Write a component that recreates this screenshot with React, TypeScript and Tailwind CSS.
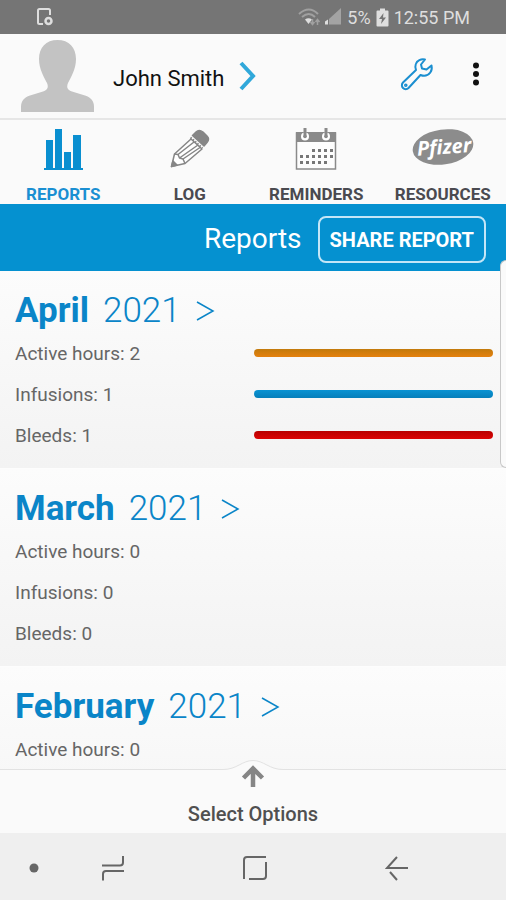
import { useState } from "react";
import type { ReactNode } from "react";

interface StatType {
  label: string;
  value: number;
  bar: string;
}

interface MonthType {
  month: string;
  year: number;
  stats: StatType[];
}

const orangeBar = "bg-linear-to-b from-[#c27a0c] to-[#e5810f]";
const blueBar = "bg-linear-to-b from-[#0a93d3] to-[#067fba]";
const redBar = "bg-linear-to-b from-[#b80000] to-[#dc0404]";

const makeStats = (active: number, infusions: number, bleeds: number): StatType[] => [
  { label: "Active hours", value: active, bar: orangeBar },
  { label: "Infusions", value: infusions, bar: blueBar },
  { label: "Bleeds", value: bleeds, bar: redBar },
];

const months: MonthType[] = [
  { month: "April", year: 2021, stats: makeStats(2, 1, 1) },
  { month: "March", year: 2021, stats: makeStats(0, 0, 0) },
  { month: "February", year: 2021, stats: [{ label: "Active hours", value: 0, bar: orangeBar }] },
];

const StatusBar = () => (
  <div className="flex h-[34px] shrink-0 items-center bg-[#757575] pr-9 pl-9 text-[#dedede]">
    <svg width="18" height="20" viewBox="0 0 18 20" fill="none" stroke="currentColor" strokeWidth="2">
      <path d="M7 17H3.5Q2 17 2 15.500V3.500Q2 2 3.500 2H12.500Q14 2 14 3.500V8" />
      <circle cx="12.500" cy="14" r="3" strokeWidth="2.500" />
    </svg>
    <div className="ml-auto flex items-center gap-[5px]">
      <svg width="44" height="20" viewBox="0 0 44 20" fill="none">
        <path d="M1 7Q11 -2 20 7M4 10Q11 4 17 10" stroke="#a0a0a0" strokeWidth="2" />
        <path d="M7 12.500Q10.500 10 14 12.500L10.500 17Z" fill="#dedede" />
        <path d="M14.500 12V17M12.500 15L14.500 17.500L16.500 15M19.500 18V13M17.500 15L19.500 12.500L21.500 15" stroke="#a0a0a0" strokeWidth="1.500" />
        <path d="M27 17.500V14.500L30 12.500V17.500Z" fill="#dedede" />
        <path d="M31 17.500V12L43 1V17.500Z" fill="#a3a3a3" />
      </svg>
      <span className="text-[18px]">5%</span>
      <svg width="13" height="19" viewBox="0 0 13 19">
        <path d="M4 0.500H9V2.500H11.500Q12.500 2.500 12.500 3.500V17.500Q12.500 18.500 11.500 18.500H1.500Q0.500 18.500 0.500 17.500V3.500Q0.500 2.500 1.500 2.500H4Z" fill="currentColor" />
        <path d="M7.500 5L3 11H6L5 16L10 9.500H7Z" fill="#757575" />
      </svg>
      <span className="text-[18px]">12:55 PM</span>
    </div>
  </div>
);

const Header = () => (
  <header className="flex h-[86px] shrink-0 items-center border-b-2 border-[#e6e6e6] bg-[#fafafa] pr-[14px] pl-5">
    <svg width="75" height="74" viewBox="0 0 75 74" fill="#c3c3c3">
      <path d="M37.500 1C49 1 56 8.500 56 20C56 30 51 38 48 44C46 49 48 51 52 52.500L65 56.500C71 58.500 74 62 74 68V73H1V68C1 62 4 58.500 10 56.500L23 52.500C27 51 29 49 27 44C24 38 19 30 19 20C19 8.500 26 1 37.500 1Z" />
    </svg>
    <button type="button" className="ml-[18px] flex items-center gap-[14px] text-[22px] text-[#111111]">
      <span className="pt-1">John Smith</span>
      <svg width="20" height="32" viewBox="0 0 20 32" fill="none" stroke="#30a8da" strokeWidth="4">
        <path d="M3 3L15 16L3 29" />
      </svg>
    </button>
    <div className="ml-auto flex items-center gap-[26px] pb-1">
      <button type="button" aria-label="Settings">
        <svg width="34" height="34" viewBox="0 0 34 34" fill="none" stroke="#1b8fd0" strokeWidth="2" strokeLinejoin="round">
          <path d="M25 2.500C21 1.500 17 3.500 15.800 7C15 9 15.400 11 16 13L3 25.500C1.500 27 1.500 29.500 3 31C4.500 32.500 7 32.500 8.500 31L20.500 18C24 19.500 28 18.500 30.300 15.500C31.800 13.500 32 11 31.500 8.500L26.500 12.500L22 11.500L21 7.500Z" />
          <circle cx="5.800" cy="28.200" r="0.800" />
        </svg>
      </button>
      <button type="button" aria-label="More" className="flex w-8 justify-center">
        <svg width="8" height="24" viewBox="0 0 8 24" fill="#111111">
          <circle cx="4" cy="3.500" r="3" />
          <circle cx="4" cy="12" r="3" />
          <circle cx="4" cy="20.500" r="3" />
        </svg>
      </button>
    </div>
  </header>
);

const ReportsIcon = () => (
  <svg width="40" height="42" viewBox="0 0 40 42" fill="#0a8fd0">
    <path d="M1 40H3V12H10V40H12V1H19V40H21V24H28V40H30V7H38V40H40V42H1Z" />
  </svg>
);

const LogIcon = () => (
  <svg width="40" height="42" viewBox="0 0 40 42" fill="none" stroke="#868686" strokeWidth="1.500" strokeLinejoin="round">
    <path d="M21 11L32 21L15 35.500L1.500 38.500L4.500 26Z" fill="#fff" />
    <path d="M4.500 26L8 26.500L9.500 30L13 31L15 35.500M8 26.500L24 14M9.500 30L28 17M13 31L30 19.500" />
    <path d="M1.500 38.500L3 33L7 37Z" fill="#868686" />
    <path d="M26 4Q29 1 33 4L37 8Q40 11 37 14.500L34 18L22.500 7.500Z" fill="#868686" />
    <path d="M20.500 9.500L32.500 20" strokeWidth="2" strokeDasharray="1.500 1.500" />
  </svg>
);

const dotRows = [
  { y: 21, xs: [17, 23, 29, 35] },
  { y: 27, xs: [5, 11, 17, 23, 29, 35] },
  { y: 33, xs: [5, 11, 17, 23, 29] },
];

const RemindersIcon = () => (
  <svg width="42" height="42" viewBox="0 0 42 42">
    <path d="M1.500 5V41H40.500V5Z" fill="#fdfdfd" stroke="#8a8a8a" strokeWidth="1.500" />
    <path d="M1 4H41V14H1Z" fill="#8a8a8a" />
    {[10, 31].map((x) => (
      <g key={x}>
        <circle cx={x} cy="8.500" r="4" fill="#fff" />
        <path d={`M${x} 0V9`} stroke="#8a8a8a" strokeWidth="3" />
        <circle cx={x} cy="8.500" r="1.800" fill="#8a8a8a" />
      </g>
    ))}
    {dotRows.map((row) =>
      row.xs.map((x) => <rect key={`${x}-${row.y}`} x={x} y={row.y} width="3" height="3" fill="#777777" />)
    )}
  </svg>
);

const ResourcesIcon = () => (
  <svg width="62" height="42" viewBox="0 0 62 42">
    <ellipse cx="31" cy="19" rx="30.500" ry="17.500" transform="rotate(-8 31 19)" fill="#8c8c8c" />
    <text x="32" y="26" textAnchor="middle" transform="rotate(-4 31 19)" fill="#fff" className="font-['Open_Sans',sans-serif] text-[20px] font-bold italic">
      Pfizer
    </text>
  </svg>
);

const tabs: { name: string; icon: ReactNode }[] = [
  { name: "REPORTS", icon: <ReportsIcon /> },
  { name: "LOG", icon: <LogIcon /> },
  { name: "REMINDERS", icon: <RemindersIcon /> },
  { name: "RESOURCES", icon: <ResourcesIcon /> },
];

const MonthCard = ({ month, year, stats }: MonthType) => (
  <section className="min-h-[198px] shrink-0 border-b border-[#fdfdfd] bg-linear-to-b from-[#fcfcfc] to-[#f3f3f3] pt-4 pr-[13px] pb-[11px] pl-[15px]">
    <h2 className="text-[35px] leading-[47px] text-[#0a85c8]">
      <button type="button" className="flex items-center gap-[14px]">
        <span className="font-bold">{month}</span>
        <span className="font-light">{year}</span>
        <svg width="20" height="22" viewBox="0 0 20 22" fill="none" stroke="currentColor" strokeWidth="1.500">
          <path d="M2 2L18 11L2 20" />
        </svg>
      </button>
    </h2>
    {stats.map((stat) => (
      <div key={stat.label} className="grid h-[41px] grid-cols-2 items-center">
        <p className="text-[19px] text-[#666666]">
          {stat.label}: {stat.value}
        </p>
        {stat.value > 0 ? <div className={`mb-1 h-2 rounded-full ${stat.bar}`}></div> : null}
      </div>
    ))}
  </section>
);

const SelectOptions = () => (
  <div className="relative h-16 shrink-0 border-t border-[#e2e2e2] bg-[#fafafa]">
    {/* bump that rises above the top border */}
    <svg className="absolute -top-[11px] left-1/2 -translate-x-1/2" width="60" height="32" viewBox="0 0 60 32">
      <path d="M0 10.500C14 10.500 19 1.500 30 1.500S46 10.500 60 10.500V14H0Z" fill="#fafafa" />
      <path d="M0 10.500C14 10.500 19 1.500 30 1.500S46 10.500 60 10.500" fill="none" stroke="#e2e2e2" />
      <path d="M30 28V10M20.500 19L30 9.500L39.500 19" fill="none" stroke="#858585" strokeWidth="4.500" />
    </svg>
    <button type="button" className="h-full w-full pt-6 text-[20px] font-medium text-[#505050]">
      Select Options
    </button>
  </div>
);

const NavBar = () => (
  <nav className="grid h-[67px] shrink-0 grid-cols-[68px_1fr_1fr_1fr] items-center justify-items-center bg-[#efefef] pt-[2px] pr-9 text-[#666666]">
    <svg width="10" height="10" viewBox="0 0 10 10" fill="currentColor">
      <circle cx="5" cy="5" r="4.500" />
    </svg>
    <button type="button" aria-label="Recent apps" className="pr-11">
      <svg width="24" height="26" viewBox="0 0 24 26" fill="none" stroke="currentColor" strokeWidth="2">
        <path d="M1 10.500H19Q22 10.500 22 7.500V1M23 16H5Q2 16 2 19V25.500" />
      </svg>
    </button>
    <button type="button" aria-label="Home" className="pr-7">
      <svg width="26" height="26" viewBox="0 0 26 26" fill="none" stroke="currentColor" strokeWidth="2">
        <path d="M24 2H5Q2 2 2 5V24M7 24H21Q24 24 24 21V7" />
      </svg>
    </button>
    <button type="button" aria-label="Back" className="pr-3">
      <svg width="24" height="26" viewBox="0 0 24 26" fill="none" stroke="currentColor" strokeWidth="2">
        <path d="M23 13H2L12 2M5 17L12 25" />
      </svg>
    </button>
  </nav>
);

const App = () => {
  const [activeTab, setActiveTab] = useState<string>("REPORTS");

  return (
    <main className="relative flex h-screen w-full flex-col overflow-hidden bg-[#fafafa] font-[Roboto,sans-serif]">
      <StatusBar />
      <Header />
      <nav className="grid h-[84px] shrink-0 grid-cols-4 bg-[#fafafa] pt-2">
        {tabs.map((tab) => (
          <button
            key={tab.name}
            type="button"
            onClick={() => setActiveTab(tab.name)}
            className={`flex flex-col items-center gap-3 text-[17px] leading-6 font-bold ${activeTab === tab.name ? "text-[#1a8fd2]" : "text-[#4a4a50]"}`}
          >
            {tab.icon}
            {tab.name}
          </button>
        ))}
      </nav>
      <div className="flex h-[67px] shrink-0 items-center justify-end gap-4 bg-[#0591d0] pt-1 pr-5 text-white">
        <h1 className="pb-[2px] text-[28px]">Reports</h1>
        <button type="button" className="h-[47px] rounded-lg border-2 border-[#c4e6f7] px-[10px] text-[20px] font-bold">
          SHARE REPORT
        </button>
      </div>
      <div className="flex min-h-0 flex-1 flex-col overflow-y-auto [scrollbar-width:none]">
        {months.map((item) => (
          <MonthCard key={item.month} {...item} />
        ))}
      </div>
      {/* edge panel handle */}
      <div className="absolute top-[260px] right-0 h-[208px] w-[6px] rounded-l-md border border-r-0 border-[#c8c8c8] bg-[#fafafa]"></div>
      <SelectOptions />
      <NavBar />
    </main>
  );
};

export default App;
